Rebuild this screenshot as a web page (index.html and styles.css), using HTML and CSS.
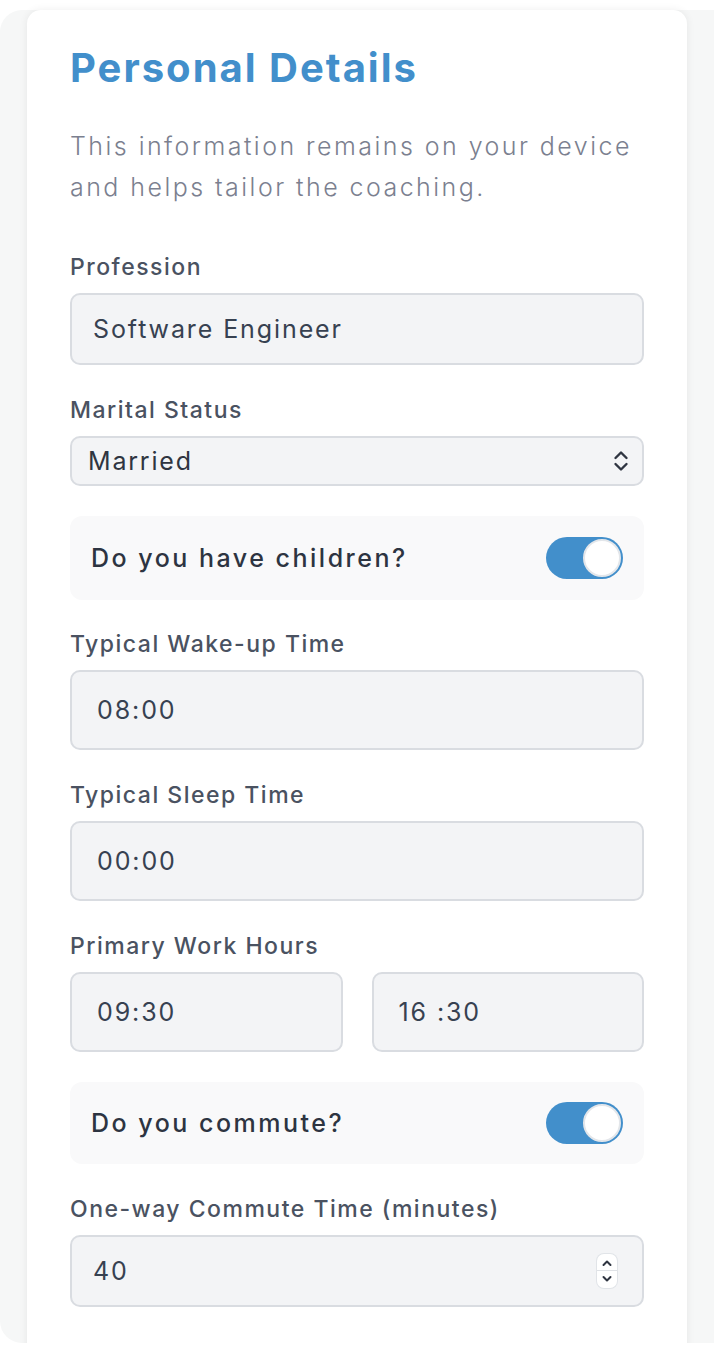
FILE: index.html
```html
<!DOCTYPE html>
<html lang="en">
<head>
    <meta charset="UTF-8">
    <meta name="viewport" content="width=device-width, initial-scale=1.0">
    <title>Personal Details</title>
    <link rel="stylesheet" href="styles.css">
</head>
<body>
    <div class="screen">
        <section class="card">
            <h1 class="card-title">Personal Details</h1>
            <p class="card-intro">This information remains on your device and helps tailor the coaching.</p>

            <div class="field">
                <label class="field-label" for="profession">Profession</label>
                <input id="profession" class="text-input input-md" type="text" value="Software Engineer">
            </div>

            <div class="field">
                <label class="field-label" for="marital">Marital Status</label>
                <div class="select-box">
                    <span id="marital" class="select-value">Married</span>
                    <svg class="select-arrows" width="16" height="22" viewBox="0 0 16 22">
                        <path d="M2.5 8 L8 2.5 L13.5 8" fill="none" stroke="#2f3541" stroke-width="2.4" stroke-linecap="round" stroke-linejoin="round"/>
                        <path d="M2.5 14 L8 19.5 L13.5 14" fill="none" stroke="#2f3541" stroke-width="2.4" stroke-linecap="round" stroke-linejoin="round"/>
                    </svg>
                </div>
            </div>

            <div class="toggle-row">
                <span class="toggle-text">Do you have children?</span>
                <span class="switch on"><span class="knob"></span></span>
            </div>

            <div class="field">
                <label class="field-label" for="wake">Typical Wake-up Time</label>
                <input id="wake" class="text-input input-lg" type="text" value="08:00">
            </div>

            <div class="field">
                <label class="field-label" for="sleep">Typical Sleep Time</label>
                <input id="sleep" class="text-input input-lg" type="text" value="00:00">
            </div>

            <div class="field">
                <label class="field-label" for="work-start">Primary Work Hours</label>
                <div class="pair">
                    <input id="work-start" class="text-input input-lg" type="text" value="09:30">
                    <input id="work-end" class="text-input input-lg" type="text" value="16 :30">
                </div>
            </div>

            <div class="toggle-row short">
                <span class="toggle-text">Do you commute?</span>
                <span class="switch on"><span class="knob"></span></span>
            </div>

            <div class="field">
                <label class="field-label" for="commute">One-way Commute Time (minutes)</label>
                <div class="number-box">
                    <input id="commute" class="number-value" type="text" value="40">
                    <span class="spinner">
                        <svg width="20" height="34" viewBox="0 0 20 34">
                            <path d="M6.5 11 L10 7.5 L13.5 11" fill="none" stroke="#2f3541" stroke-width="2" stroke-linecap="round" stroke-linejoin="round"/>
                            <path d="M6.5 23 L10 26.5 L13.5 23" fill="none" stroke="#2f3541" stroke-width="2" stroke-linecap="round" stroke-linejoin="round"/>
                        </svg>
                    </span>
                </div>
            </div>
        </section>
    </div>
</body>
</html>
```

FILE: styles.css
```css
* {
    margin: 0;
    padding: 0;
    box-sizing: border-box;
}

html, body {
    background: #fff;
    overflow: hidden;
}

body {
    font-family: 'Inter', 'Open Sans', sans-serif;
    color: #374151;
}

/* Gray backdrop behind the card */
.screen {
    margin-top: 10px;
    height: 1333px;
    background: #f6f7f7;
    border-radius: 22px 0 0 22px;
    padding: 0 27px;
}

.card {
    background: #fff;
    border-radius: 14px;
    box-shadow: 0 0 9px rgba(0, 0, 0, 0.07);
    height: 1360px;
    padding: 36px 43px 0;
}

.card-title {
    font-size: 40px;
    font-weight: 700;
    line-height: 44px;
    color: #428fcb;
    letter-spacing: 2px;
}

.card-intro {
    margin-top: 36px;
    font-size: 25px;
    font-weight: 300;
    line-height: 41px;
    color: #7b808f;
    letter-spacing: 2.45px;
    margin-bottom: 44px;
}

.field {
    margin-bottom: 30px;
}

.field-label {
    display: block;
    font-size: 23px;
    line-height: 31px;
    font-weight: 500;
    color: #4a5261;
    letter-spacing: 1.5px;
    margin-bottom: 10px;
}

.text-input {
    display: block;
    width: 100%;
    border: 2px solid #d9dce1;
    border-radius: 10px;
    background: #f3f4f6;
    font-family: inherit;
    font-size: 25px;
    letter-spacing: 1.9px;
    color: #374151;
    outline: none;
    -webkit-appearance: none;
    appearance: none;
}

.input-md {
    height: 72px;
    padding: 0 21px;
}

.input-lg {
    height: 80px;
    padding: 0 25px;
}

.select-box {
    height: 50px;
    border: 2px solid #d9dce1;
    border-radius: 10px;
    background: #f3f4f6;
    display: flex;
    align-items: center;
    justify-content: space-between;
    padding: 0 13px 0 16px;
}

.select-value {
    font-size: 25px;
    letter-spacing: 1.8px;
    color: #2f3541;
}

.pair {
    display: grid;
    grid-template-columns: 1fr 1fr;
    gap: 29px;
}

.toggle-row {
    height: 84px;
    background: #f9f9fa;
    border-radius: 12px;
    display: flex;
    align-items: center;
    justify-content: space-between;
    padding: 0 21px;
    margin-bottom: 29px;
}

.toggle-row.short {
    height: 82px;
    margin-bottom: 30px;
}

.toggle-text {
    font-size: 25px;
    font-weight: 500;
    letter-spacing: 2.5px;
    color: #2d3441;
}

.switch {
    width: 77px;
    height: 42px;
    border-radius: 21px;
    background: #ccd1d8;
    display: flex;
    align-items: center;
    padding: 0 2px;
}

.switch.on {
    background: #428fcb;
    justify-content: flex-end;
}

.knob {
    width: 38px;
    height: 38px;
    border-radius: 50%;
    background: #fff;
    border: 2px solid #e3e6ea;
}

.number-box {
    height: 72px;
    border: 2px solid #d9dce1;
    border-radius: 10px;
    background: #f3f4f6;
    display: flex;
    align-items: center;
    padding: 0 25px 0 21px;
}

.number-value {
    flex: 1;
    min-width: 0;
    border: none;
    background: transparent;
    font-family: inherit;
    font-size: 25px;
    letter-spacing: 1.9px;
    color: #374151;
    outline: none;
}

.spinner {
    width: 20px;
    height: 34px;
    background: #fff;
    border-radius: 7px;
    box-shadow: 0 0 0 1px #e1e4e8;
    display: flex;
    position: relative;
}

.spinner::after {
    content: '';
    position: absolute;
    left: 0;
    right: 0;
    top: 16px;
    height: 1px;
    background: #dfe2e6;
}
```
